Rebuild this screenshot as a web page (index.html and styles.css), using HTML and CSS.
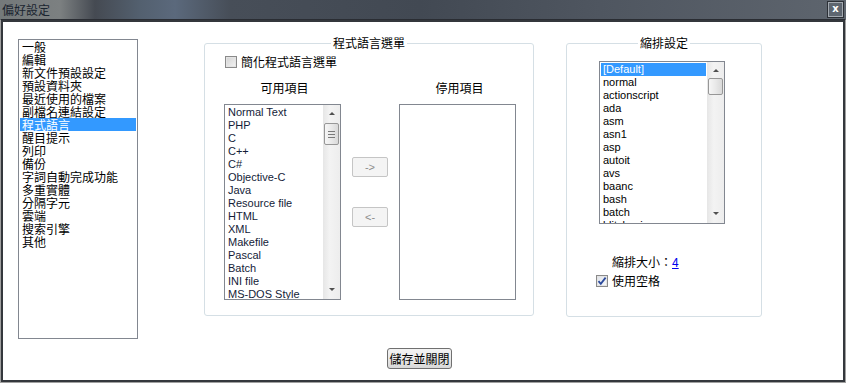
FILE: index.html
```html
<!DOCTYPE html>
<html lang="zh-Hant">
<head>
    <meta charset="UTF-8">
    <meta name="viewport" content="width=device-width, initial-scale=1.0">
    <title>偏好設定</title>
    <link rel="stylesheet" href="styles.css">
</head>
<body>
    <div class="titlebar">
        <span class="title">偏好設定</span>
        <span class="close">x</span>
    </div>
    <div class="window">
        <div class="main">
            <ul class="nav">
                <li>一般</li>
                <li>編輯</li>
                <li>新文件預設設定</li>
                <li>預設資料夾</li>
                <li>最近使用的檔案</li>
                <li>副檔名連結設定</li>
                <li class="selected">程式語言</li>
                <li>醒目提示</li>
                <li>列印</li>
                <li>備份</li>
                <li>字詞自動完成功能</li>
                <li>多重實體</li>
                <li>分隔字元</li>
                <li>雲端</li>
                <li>搜索引擎</li>
                <li>其他</li>
            </ul>

            <fieldset class="group lang">
                <legend>程式語言選單</legend>
                <label class="check simplify"><span class="box"></span>簡化程式語言選單</label>
                <div class="columns">
                    <div class="col">
                        <div class="col-title">可用項目</div>
                        <div class="listbox">
                            <ul class="items">
                                <li>Normal Text</li>
                                <li>PHP</li>
                                <li>C</li>
                                <li>C++</li>
                                <li>C#</li>
                                <li>Objective-C</li>
                                <li>Java</li>
                                <li>Resource file</li>
                                <li>HTML</li>
                                <li>XML</li>
                                <li>Makefile</li>
                                <li>Pascal</li>
                                <li>Batch</li>
                                <li>INI file</li>
                                <li>MS-DOS Style</li>
                                <li>ASP</li>
                            </ul>
                            <div class="scrollbar">
                                <span class="arrow up"></span>
                                <span class="thumb grip"><i></i><i></i><i></i></span>
                                <span class="arrow down"></span>
                            </div>
                        </div>
                    </div>
                    <div class="movers">
                        <button class="move" disabled>-&gt;</button>
                        <button class="move" disabled>&lt;-</button>
                    </div>
                    <div class="col">
                        <div class="col-title">停用項目</div>
                        <div class="listbox"></div>
                    </div>
                </div>
            </fieldset>

            <fieldset class="group indent">
                <legend>縮排設定</legend>
                <div class="listbox short">
                    <ul class="items">
                        <li class="selected">[Default]</li>
                        <li>normal</li>
                        <li>actionscript</li>
                        <li>ada</li>
                        <li>asm</li>
                        <li>asn1</li>
                        <li>asp</li>
                        <li>autoit</li>
                        <li>avs</li>
                        <li>baanc</li>
                        <li>bash</li>
                        <li>batch</li>
                        <li>blitzbasic</li>
                    </ul>
                    <div class="scrollbar">
                        <span class="arrow up"></span>
                        <span class="thumb small"></span>
                        <span class="arrow down"></span>
                    </div>
                </div>
                <div class="tabsize">縮排大小：<a href="#">4</a></div>
                <label class="check spaces">
                    <span class="box checked">
                        <svg width="10" height="10" viewBox="0 0 10 10"><path d="M1.5 5.2 L3.8 7.8 L8.6 1.6" fill="none" stroke="#2c4a9c" stroke-width="1.8"/></svg>
                    </span>使用空格
                </label>
            </fieldset>
        </div>
        <div class="footer">
            <button class="save">儲存並關閉</button>
        </div>
    </div>
</body>
</html>
```

FILE: styles.css
```css
html, body {
    margin: 0;
    height: 383px;
    overflow: hidden;
    background: #fff;
}
body {
    font-family: "Noto Sans CJK TC", "Liberation Sans", sans-serif;
    font-size: 12px;
    color: #000;
}

/* title bar */
.titlebar {
    height: 19px;
    display: flex;
    align-items: center;
    justify-content: space-between;
    background: linear-gradient(to right, #74797a 0, #7c8081 60px, #454a52 95px, #53606f 140px, #5b697c 175px, #474e58 230px, #424953 420px, #4f5660 600px, #5e656e 846px);
}
.titlebar .title {
    margin-left: 2px;
    color: #1b2530;
    font-size: 12px;
    line-height: 14px;
}
.titlebar .close {
    width: 15px;
    height: 15px;
    margin-right: 2px;
    border: 1px solid #2c3036;
    box-shadow: inset 0 0 0 1px #a3a9b0;
    background: #5e6670;
    color: #fff;
    font: bold 10px/14px "DejaVu Sans", sans-serif;
    text-align: center;
}

/* window */
.window {
    box-sizing: border-box;
    height: 364px;
    border: 1px solid #a0a0a0;
    border-top-color: #2a2d33;
    box-shadow: inset 0 0 0 2px #34373c;
    padding: 16px 0 0 17px;
}
.main {
    display: flex;
    align-items: flex-start;
}

/* left navigation list */
.nav {
    box-sizing: border-box;
    width: 120px;
    height: 300px;
    margin: 3px 0 0 0;
    padding: 0 1px;
    list-style: none;
    border: 1px solid #828790;
}
.nav li {
    height: 13px;
    line-height: 13px;
    padding-left: 2px;
    white-space: nowrap;
}
.nav li.selected, .items li.selected {
    background: #3399ff;
    color: #fff;
}

/* group boxes */
.group {
    box-sizing: border-box;
    margin: 0;
    padding: 0;
    min-width: 0;
    border: 1px solid #d5dfe5;
    border-radius: 3px;
}
.group legend {
    margin: 0 auto;
    padding: 0 2px;
    line-height: 14px;
}
.lang {
    width: 330px;
    height: 280px;
    margin-left: 66px;
    padding-top: 5px;
}
.indent {
    width: 196px;
    height: 281px;
    margin-left: 32px;
    padding-top: 11px;
}

/* checkboxes */
.check {
    display: flex;
    align-items: center;
    line-height: 14px;
}
.check .box {
    box-sizing: border-box;
    width: 12px;
    height: 12px;
    border: 1px solid #8a8a8a;
    background: linear-gradient(135deg, #d2d2d2, #f4f4f4);
    box-shadow: inset 0 0 0 1px #e4e4e4;
    display: flex;
    align-items: center;
    justify-content: center;
}
.check .box.checked {
    background: linear-gradient(135deg, #dfe3ea, #f8f9fb);
}
.simplify {
    margin-left: 20px;
}
.simplify .box {
    margin-right: 4px;
}
.spaces {
    margin: 5px 0 0 29px;
}
.spaces .box {
    margin-right: 4px;
}

/* available / disabled columns */
.columns {
    display: flex;
    margin: 12px 0 0 19px;
    gap: 11px;
}
.col {
    width: 117px;
}
.col-title {
    text-align: center;
    line-height: 14px;
    margin: 0 0 9px 4px;
}
.listbox {
    box-sizing: border-box;
    width: 117px;
    height: 196px;
    border: 1px solid #828790;
    display: flex;
    overflow: hidden;
    background: #fff;
}
.listbox.short {
    width: 126px;
    height: 163px;
    margin-left: 32px;
}
.items {
    flex: 1;
    margin: 0;
    padding: 1px;
    list-style: none;
    overflow: hidden;
    font-family: "Liberation Sans", Arial, sans-serif;
    font-size: 11px;
    color: #141c38;
}
.items li {
    height: 13px;
    line-height: 13px;
    padding-left: 2px;
    white-space: nowrap;
}
.short .items {
    color: #000;
}

/* fake scrollbars */
.scrollbar {
    width: 17px;
    flex: none;
    display: flex;
    flex-direction: column;
    align-items: center;
    background: linear-gradient(to right, #e6e6e6, #f3f3f3 40%, #ededed);
}
.arrow {
    width: 0;
    height: 0;
    border-left: 3px solid transparent;
    border-right: 3px solid transparent;
}
.arrow.up {
    margin-top: 7px;
    border-bottom: 3px solid #505050;
}
.arrow.down {
    margin-top: auto;
    margin-bottom: 8px;
    border-top: 3px solid #505050;
}
.thumb {
    box-sizing: border-box;
    width: 15px;
    margin-top: 8px;
    border: 1px solid #979797;
    border-radius: 2px;
    background: linear-gradient(to right, #f6f6f6, #e9e9e9 50%, #d9d9d9);
}
.thumb.grip {
    height: 22px;
    display: flex;
    flex-direction: column;
    align-items: center;
    justify-content: center;
    gap: 2px;
}
.thumb.grip i {
    display: block;
    width: 7px;
    height: 1px;
    background: #7a7a7a;
}
.thumb.small {
    height: 17px;
    margin-top: 6px;
}

/* move buttons */
.movers {
    display: flex;
    flex-direction: column;
    gap: 30px;
    padding-top: 76px;
}
.move {
    width: 36px;
    height: 20px;
    padding: 0;
    border: 1px solid #c5c5c5;
    border-radius: 2px;
    background: #f4f4f4;
    color: #8d8d8d;
    font-family: "Liberation Sans", Arial, sans-serif;
    font-size: 11px;
}

/* tab size */
.tabsize {
    margin: 31px 0 0 45px;
    line-height: 14px;
}
.tabsize a {
    color: #0000ee;
}

/* footer */
.footer {
    display: flex;
    justify-content: center;
    padding-right: 24px;
    margin-top: 9px;
}
.save {
    width: 65px;
    height: 21px;
    padding: 0;
    border: 1px solid #707070;
    border-radius: 3px;
    background: linear-gradient(#f3f3f3, #e9e9e9 50%, #d8d8d8);
    font-family: "Noto Sans CJK TC", sans-serif;
    font-size: 12px;
    color: #000;
}
```
